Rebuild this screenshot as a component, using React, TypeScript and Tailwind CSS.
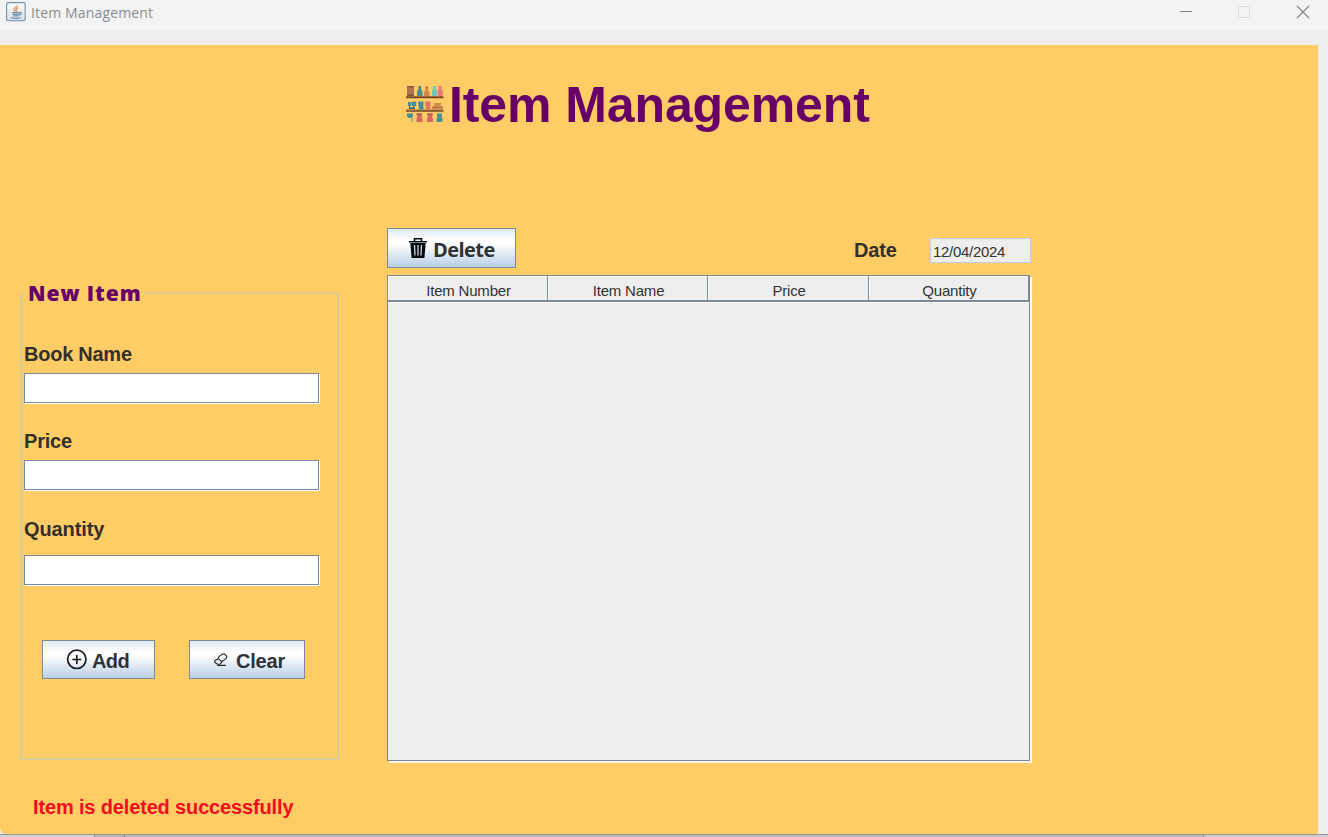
import React from "react";

const columns = [
  { label: "Item Number", width: "w-[160px]" },
  { label: "Item Name", width: "w-[160px]" },
  { label: "Price", width: "w-[161px]" },
  { label: "Quantity", width: "w-[160px]" },
];

function JavaIcon() {
  return (
    <svg className="ml-[6px] mt-[2px] h-[20px] w-[20px] shrink-0" viewBox="0 0 20 20" fill="none">
      <defs>
        <linearGradient id="java" x1="0" y1="0" x2="0" y2="1">
          <stop stopColor="#fbfbfb" />
          <stop offset="1" stopColor="#d5dde4" />
        </linearGradient>
      </defs>
      <rect x=".6" y=".6" width="18.6" height="18.2" rx="1.8" fill="url(#java)" stroke="#7890a2" strokeWidth="1.1" />
      <path d="M10.8 3.2c.8 2.2-3.2 2.6-2.7 4.7.2.8 1 1.3 1.5 1.9M12.2 5.6c-1.9.8-2.6 1.6-1.8 2.6.5.7.2 1.3-.3 1.8" stroke="#e5a067" strokeWidth="1.5" />
      <path d="M6 10.7h7.5M6.6 12.3h6.2M7.2 13.8h5.2M13 10.6c3-.7 2.8 2-.2 2.7M4.8 15.5c2.8 1 7.6 1 10 0" stroke="#6f8fae" strokeWidth="1.3" />
    </svg>
  );
}

function ShelfIcon() {
  return (
    <svg className="h-[38px] w-[38px] shrink-0" viewBox="0 0 38 38">
      <path d="M1 1h7v10H1z" fill="#b0744a" />
      <path d="M1 1h7v1.2H1zM1 9.5h7V11H1z" fill="#81523a" />
      <path d="M12.5 1h2.5v3l1.5 2v5H11V6l1.5-2z" fill="#4f8e91" />
      <path d="M19.5 1.5h2.5V5l1.5 2v4H18V7l1.5-2z" fill="#d48746" />
      <path d="M27 1h3v3l1 2v5h-5V6l1-2z" fill="#6fc3c4" />
      <path d="M32.5 1h3v3l1.3 2v5H31.8V6l.7-2z" fill="#ec7b6a" />
      <path d="M12.5 1H15v2h-2.5M19.5 1.5H22v2h-2.5" fill="#74604f" opacity=".5" />
      <path d="M0 11h37.5v1.2H0zM0 24.5h37.5v1.2H0z" fill="#a2682f" />
      <path d="M0 12h37.5v1.3H0zM0 25.5h37.5v1.3H0z" fill="#6f4629" />
      <path d="M2 17h3.5v4H2zM6 16.5h4.2V21H8.5v2H7v-2H6z" fill="#438f9a" />
      <path d="M3 21h1v3H3zM3.5 22.5h5.5v1.5H3.5z" fill="#315e68" />
      <path d="M12 16.5h5.5v8H13z" fill="#498e94" />
      <path d="M19 16.5h5.5v8H20z" fill="#e17668" />
      <path d="M27.5 18h8l-1 3h-6zM26 21h11v3.5H26z" fill="#d18b51" />
      <path d="M27 22.5h9" stroke="#b27446" />
      <path d="M1 28.5h6V32H6v1H2v-1H1zM31 28.5h5V31l-.5 1.5 1 1V37h-6v-3.5l1-1.5H31z" fill="#4c8f94" />
      <path d="M5.5 33H7v4H5.5z" fill="#83aa87" />
      <path d="M10.5 28.5H16V31l-.5 1.5 1 1V37h-6v-3.5l1-1.5zM21 28.5h5.5V31l-.5 1.5 1 1V37h-6v-3.5l1-1.5z" fill="#d9655e" />
      <path d="M10.5 28.5H16V30h-5.5zM21 28.5h5.5V30H21z" fill="#9d6658" />
    </svg>
  );
}

function TrashIcon() {
  return (
    <svg className="h-[20px] w-[18px]" viewBox="0 0 18 20" fill="none">
      <path d="M5.5 3V.8h7V3M0 3.8h18" stroke="#080b0e" strokeWidth="1.6" />
      <path d="M1.3 5h15.4l-1.3 15H2.6z" fill="#080b0e" />
      <path d="M5.5 7 6 17.5M9 7v10.5M12.5 7 12 17.5" stroke="#dbe7f2" strokeWidth="1.2" />
    </svg>
  );
}

function AddIcon() {
  return (
    <svg className="h-[21px] w-[21px]" viewBox="0 0 21 21" fill="none" stroke="#171b20" strokeWidth="1.7">
      <circle cx="10.8" cy="10.3" r="9.2" />
      <path d="M10.8 6v9M6.3 10.5h9" />
    </svg>
  );
}

function EraserIcon() {
  return (
    <svg className="h-[14px] w-[14px]" viewBox="0 0 14 14" fill="none" stroke="#252a30" strokeLinejoin="round">
      <path d="M.7 7.8 3.8 6 5 3.5 8.1 1.4 10.3.8 12.9 3.5 12 5.6 8.7 8 5.8 11.3H3.5L.7 9.3z" strokeWidth="1.1" />
      <path d="M4.2 5.6 8.2 9M3.2 12.4h8.8" strokeWidth="1.1" />
    </svg>
  );
}

const buttonClass =
  "flex shrink-0 items-center border border-[#7a8a99] bg-[linear-gradient(180deg,#dfeaf4_0%,#ffffff_30%,#ffffff_40%,#b8cfe5_100%)] text-left text-[20px] leading-[24px] font-bold text-[#303238]";

function Field({ label, gap, tracking }: { label: string; gap: string; tracking: string }) {
  return (
    <label className={`flex flex-col ${gap}`}>
      <span className={`h-[24px] text-[20px] leading-[24px] font-bold whitespace-nowrap text-[#333029] ${tracking}`}>{label}</span>
      <input
        aria-label={label}
        className="h-[30px] w-[295px] rounded-none border border-[#7a8a99] bg-white px-1 shadow-[1px_1px_0_#fff] outline-none"
      />
    </label>
  );
}

export default function App() {
  return (
    <div className="flex h-[837px] w-[1328px] flex-col overflow-hidden bg-[#eeeeee] font-['Liberation_Sans',sans-serif]">
      <header className="flex h-[30px] shrink-0 bg-[#f3f3f3]">
        <JavaIcon />
        <span className="ml-[5px] mt-[2px] font-['Open_Sans',sans-serif] text-[14px] leading-[22px] tracking-[0.15px] text-[#8c8c8c]">Item Management</span>
        <svg className="ml-auto mr-[17px] mt-[4px] h-[16px] w-[132px]" viewBox="0 0 132 16" fill="none">
          <path d="M1 7.5h12" stroke="#858585" />
          <rect x="59.5" y="2.5" width="11" height="11" rx="1" stroke="#dddddd" />
          <path d="m118 2 12 12m0-12-12 12" stroke="#858585" strokeWidth="1.1" />
        </svg>
      </header>

      <main className="mt-[15px] flex h-[789px] w-[1318px] shrink-0 flex-col rounded-bl-[6px] bg-[#ffcc66]">
        <div className="flex h-[183px] shrink-0 pl-[406px] pt-[30px]">
          <div className="mt-[10px]"><ShelfIcon /></div>
          <h1 className="ml-[5px] text-[50px] leading-[60px] font-bold tracking-[-0.1px] whitespace-nowrap text-[#660066]">Item Management</h1>
        </div>

        <div className="flex">
          <aside className="w-[387px] shrink-0 pl-[20px] pt-[53px]">
            <section className="flex h-[479px] w-[319px] flex-col">
              <div className="flex h-[24px] shrink-0 items-center">
                <span className="h-px w-[4px] bg-[#cfcc9c]" />
                <h2 className="ml-[4px] w-[115px] font-['Open_Sans',sans-serif] text-[21px] leading-[24px] font-extrabold tracking-[0.95px] whitespace-nowrap text-[#660066]">New Item</h2>
                <span className="h-[2px] grow bg-[#dccc90]" />
              </div>
              <div className="-mt-[12px] flex grow flex-col border-x-2 border-b-2 border-[#d8cc96] pl-[2px] pt-[49px]">
                <Field label="Book Name" gap="gap-[7px]" tracking="tracking-[-0.25px]" />
                <div className="mt-[26px]"><Field label="Price" gap="gap-[7px]" tracking="tracking-[-0.2px]" /></div>
                <div className="mt-[27px]"><Field label="Quantity" gap="gap-[14px]" tracking="tracking-[-0.1px]" /></div>
                <div className="mt-[55px] flex gap-[34px] pl-[18px]">
                  <button className={`${buttonClass} h-[39px] w-[113px] pl-[23px]`}>
                    <AddIcon /><span className="ml-[5px] mt-[3px] tracking-[-0.6px]">Add</span>
                  </button>
                  <button className={`${buttonClass} h-[39px] w-[116px] pl-[24px]`}>
                    <EraserIcon /><span className="ml-[8px] mt-[3px] tracking-[-0.2px]">Clear</span>
                  </button>
                </div>
              </div>
            </section>
            <p className="mt-[35px] ml-[13px] text-[20px] leading-[24px] font-bold tracking-[-0.15px] whitespace-nowrap text-[#f20c22]">Item is deleted successfully</p>
          </aside>

          <section className="w-[644px] shrink-0">
            <div className="flex h-[47px]">
              <button className={`${buttonClass} h-[40px] w-[129px] pl-[21px] font-['Open_Sans',sans-serif]`}>
                <TrashIcon /><span className="ml-[6px] mt-[3px] tracking-[-0.55px]">Delete</span>
              </button>
              <span className="ml-[338px] mt-[10px] text-[20px] leading-[24px] font-bold tracking-[-0.2px] text-[#333029]">Date</span>
              <input
                aria-label="Date"
                readOnly
                value="12/04/2024"
                className="ml-auto mt-[10px] h-[25px] w-[101px] rounded-none border border-[#b8cfe5] bg-[#eeeeee] px-[2px] pt-[2px] text-[15px] tracking-[-0.3px] text-[#333333] outline-none"
              />
            </div>
            <div className="h-[486px] w-[643px] border border-[#7a8a99] bg-[#eeeeee] shadow-[2px_2px_0_#fff8e8]">
              <div className="flex h-[26px]">
                {columns.map((column) => (
                  <div
                    key={column.label}
                    className={`${column.width} shrink-0 border-r border-b-2 border-[#7a8a99] pt-[5px] pl-[2px] text-center text-[15px] leading-[20px] tracking-[-0.2px] text-[#333333] shadow-[inset_1px_1px_0_#fff]`}
                  >
                    {column.label}
                  </div>
                ))}
              </div>
              <div className="h-px bg-white" />
            </div>
          </section>
        </div>
      </main>
      <footer className="flex h-[3px] shrink-0 border-t border-[#969696] bg-[#bcbcbc]">
        <span className="w-[95px] border-r border-[#999] bg-[#d3d3d3]" />
        <span className="w-[30px] border-r border-[#777] bg-[#b7b7b7]" />
        <span className="grow" />
        <span className="w-[125px] border-l border-[#888] bg-[#cccccc]" />
      </footer>
    </div>
  );
}
